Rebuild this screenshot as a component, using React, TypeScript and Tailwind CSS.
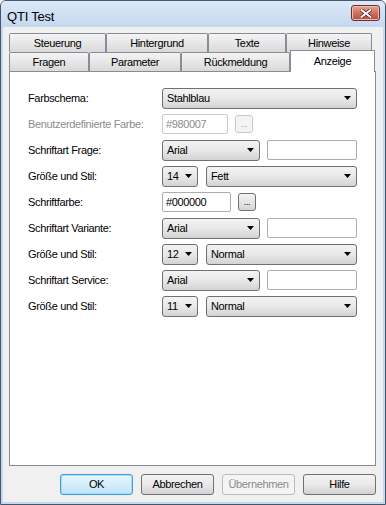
import React from 'react';

const font = "font-['Liberation_Sans',Arial,sans-serif]";

function Arrow() {
    return (
        <svg className="ml-auto mr-[5px] shrink-0" width="7" height="4" viewBox="0 0 7 4">
            <path d="M0 0H7L3.5 4Z" fill="#000" />
        </svg>
    );
}

function Combo({ w, text }: { w: string; text: string }) {
    return (
        <div className={`flex h-[21px] items-center rounded-[3px] border border-[#707070] bg-gradient-to-b from-[#f3f3f3] via-[#e8e8e8] to-[#d3d3d3] pl-[4px] ${w}`}>
            <span>{text}</span>
            <Arrow />
        </div>
    );
}

function TextBox({ w, text, disabled }: { w: string; text?: string; disabled?: boolean }) {
    return (
        <div className={`flex h-[20px] items-center rounded-[2px] border bg-white pl-[3px] ${disabled ? 'border-[#c9cbcf] text-[#8d8d8d]' : 'border-[#abadb3]'} ${w}`}>
            {text}
        </div>
    );
}

function Dots({ disabled }: { disabled?: boolean }) {
    return (
        <div className={`ml-[7px] flex h-[18px] w-[18px] items-end justify-center rounded-[3px] border pb-[3px] text-[9px] leading-none ${disabled ? 'border-[#c5c8cc] bg-[#f4f4f4] text-[#9b9bc8]' : 'border-[#707070] bg-gradient-to-b from-[#f3f3f3] to-[#d6d6d6]'}`}>
            ...
        </div>
    );
}

function Row({ label, disabled, children }: { label: string; disabled?: boolean; children: React.ReactNode }) {
    return (
        <div className="flex h-[26px] items-center">
            <div className={`w-[134px] ${disabled ? 'text-[#8d8d8d]' : ''}`}>{label}</div>
            {children}
        </div>
    );
}

function Tab({ w, text }: { w: string; text: string }) {
    return (
        <div className={`flex h-[19px] items-center justify-center rounded-t-[2px] border border-b-0 border-[#898c95] bg-gradient-to-b from-[#f4f4f4] to-[#d9d9d9] ${w}`}>
            {text}
        </div>
    );
}

function Btn({ text, kind }: { text: string; kind?: 'default' | 'disabled' }) {
    let cls = 'border-[#707070] bg-gradient-to-b from-[#f3f3f3] via-[#e9e9e9] to-[#d2d2d2]';
    if (kind === 'default') cls = 'border-[#3c9ee0] bg-gradient-to-b from-[#eaf6fd] via-[#d4eefb] to-[#bde3f7] shadow-[inset_0_0_0_1px_#a9dcf7]';
    if (kind === 'disabled') cls = 'border-[#b8bcbf] bg-[#f4f4f4] text-[#8a8a8a]';
    return (
        <div className={`flex h-[21px] w-[73px] items-center justify-center rounded-[3px] border ${cls}`}>{text}</div>
    );
}

export default function App() {
    return (
        <div className={`${font} flex h-[505px] w-[386px] flex-col rounded-t-[6px] border border-[#42566e] bg-[#c5d8ee] text-[11px] tracking-[-0.35px] text-black`}>
            {/* Title bar */}
            <div className="flex h-[26px] items-start rounded-t-[5px] bg-gradient-to-b from-[#dce9f7] to-[#c5d8ee] pl-[6px] pr-[5px] pt-[6px]">
                <span className="text-[13px] tracking-[-0.2px]">QTI Test</span>
                <div className="ml-auto mt-[-2px] flex h-[16px] w-[29px] items-center justify-center rounded-[3px] border border-[#6e2d27] bg-gradient-to-b from-[#e7a395] via-[#d0705f] to-[#bb4a36] shadow-[inset_0_0_0_1px_#eebcb2]">
                    <svg width="12" height="9" viewBox="0 0 12 9">
                        <path d="M1.5 1L10.5 8M10.5 1L1.5 8" stroke="#4a1a14" strokeWidth="3.4" strokeLinecap="square" />
                        <path d="M1.5 1L10.5 8M10.5 1L1.5 8" stroke="#fff" strokeWidth="2" strokeLinecap="square" />
                    </svg>
                </div>
            </div>

            {/* Client area */}
            <div className="mx-[2px] mb-[2px] flex flex-1 flex-col bg-[#f0f0f0] pl-[6px] pr-[7px] pt-[6px]">
                <div className="flex">
                    <Tab w="w-[97px]" text="Steuerung" />
                    <Tab w="w-[102px]" text="Hintergrund" />
                    <Tab w="w-[78px]" text="Texte" />
                    <Tab w="w-[86px]" text="Hinweise" />
                </div>
                <div className="flex items-end">
                    <Tab w="w-[80px]" text="Fragen" />
                    <Tab w="w-[92px]" text="Parameter" />
                    <Tab w="w-[109px]" text="Rückmeldung" />
                    <div className="relative z-10 -mb-px mt-[-3px] flex h-[22px] w-[85px] items-start justify-center border border-b-0 border-[#898c95] bg-white pt-[2px]">
                        Anzeige
                    </div>
                </div>

                {/* Panel */}
                <div className="flex h-[395px] flex-col border border-[#898c95] bg-white pl-[18px] pt-[13px]">
                    <Row label="Farbschema:">
                        <Combo w="w-[195px]" text="Stahlblau" />
                    </Row>
                    <Row label="Benutzerdefinierte Farbe:" disabled>
                        <TextBox w="w-[66px]" text="#980007" disabled />
                        <Dots disabled />
                    </Row>
                    <Row label="Schriftart Frage:">
                        <Combo w="w-[98px]" text="Arial" />
                        <TextBox w="ml-[7px] w-[90px]" />
                    </Row>
                    <Row label="Größe und Stil:">
                        <Combo w="w-[36px]" text="14" />
                        <Combo w="ml-[8px] w-[151px]" text="Fett" />
                    </Row>
                    <Row label="Schriftfarbe:">
                        <TextBox w="w-[69px]" text="#000000" />
                        <Dots />
                    </Row>
                    <Row label="Schriftart Variante:">
                        <Combo w="w-[98px]" text="Arial" />
                        <TextBox w="ml-[7px] w-[90px]" />
                    </Row>
                    <Row label="Größe und Stil:">
                        <Combo w="w-[36px]" text="12" />
                        <Combo w="ml-[8px] w-[151px]" text="Normal" />
                    </Row>
                    <Row label="Schriftart Service:">
                        <Combo w="w-[98px]" text="Arial" />
                        <TextBox w="ml-[7px] w-[90px]" />
                    </Row>
                    <Row label="Größe und Stil:">
                        <Combo w="w-[36px]" text="11" />
                        <Combo w="ml-[8px] w-[151px]" text="Normal" />
                    </Row>
                </div>

                {/* Buttons */}
                <div className="mt-[8px] flex justify-end gap-[8px]">
                    <Btn text="OK" kind="default" />
                    <Btn text="Abbrechen" />
                    <Btn text="Übernehmen" kind="disabled" />
                    <Btn text="Hilfe" />
                </div>
            </div>
        </div>
    );
}
